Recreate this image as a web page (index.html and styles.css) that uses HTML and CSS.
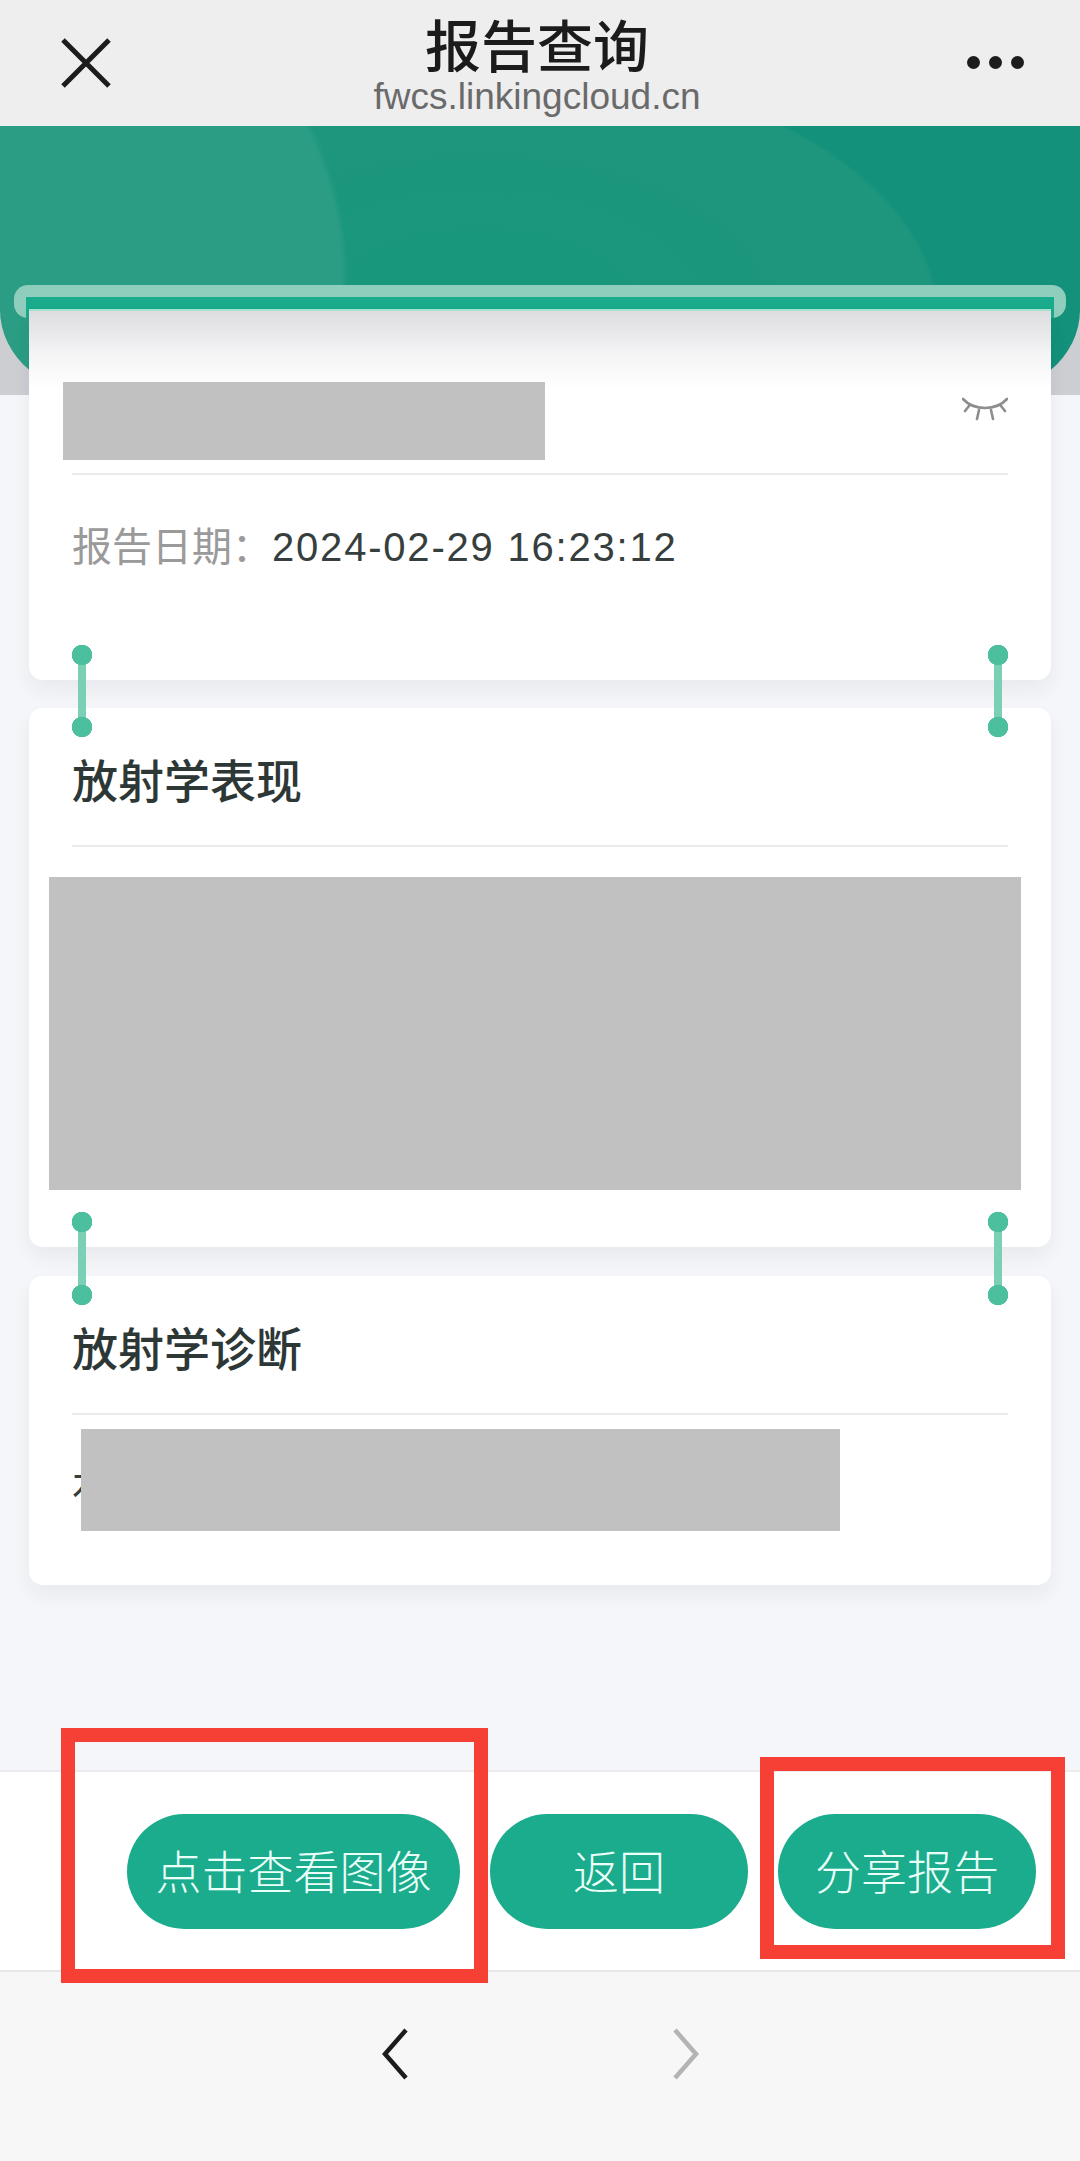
FILE: index.html
```html
<!DOCTYPE html>
<html>

<head>
    <meta charset="utf-8" />
    <title>报告查询</title>
    <link rel="stylesheet" href="styles.css">
</head>

<body>

<div class="topbar">
    <svg class="close" width="50" height="50" viewBox="0 0 50 50">
        <path d="M2 2 L48 48 M48 2 L2 48" />
    </svg>
    <div class="top-title">
        <h1>报告查询</h1>
        <p>fwcs.linkingcloud.cn</p>
    </div>
    <div class="more"><span></span><span></span><span></span></div>
</div>

<div class="main">
    <div class="hero">
        <div class="hero-green"></div>
    </div>

    <div class="sheet">
        <div class="rail"></div>

        <div class="card card-first">
            <div class="head">
                <div class="mask mask-name"></div>
                <svg class="eye" width="46" height="24" viewBox="0 0 46 24">
                    <path d="M1 2 C12 14 34 14 45 2 M7 9 L3 14 M17 13 L15 22 M29 13 L31 22 M39 9 L43 14" />
                </svg>
            </div>
            <div class="line"></div>
            <div class="date"><span class="date-label">报告日期：</span><span class="date-value">2024-02-29 16:23:12</span></div>
        </div>

        <div class="gap">
            <div class="link link-left"></div>
            <div class="link link-right"></div>
        </div>

        <div class="card">
            <h2>放射学表现</h2>
            <div class="line"></div>
            <div class="mask mask-wide"></div>
        </div>

        <div class="gap gap-second">
            <div class="link link-left"></div>
            <div class="link link-right"></div>
        </div>

        <div class="card card-last">
            <h2>放射学诊断</h2>
            <div class="line"></div>
            <p class="result">右</p>
            <div class="mask mask-result"></div>
        </div>
    </div>
</div>

<div class="actions">
    <a class="btn btn-image">点击查看图像</a>
    <a class="btn">返回</a>
    <a class="btn">分享报告</a>
    <div class="mark mark-image"></div>
    <div class="mark mark-share"></div>
</div>

<div class="nav">
    <svg width="28" height="52" viewBox="0 0 28 52">
        <path class="nav-on" d="M25 2 L4 26 L25 50" />
    </svg>
    <svg width="28" height="52" viewBox="0 0 28 52">
        <path class="nav-off" d="M3 2 L24 26 L3 50" />
    </svg>
</div>

</body>

</html>
```

FILE: styles.css
```css
* {
    padding: 0;
    margin: 0;
    box-sizing: border-box;
}

body {
    width: 1080px;
    min-height: 2161px;
    display: flex;
    flex-direction: column;
    background: #f5f6f9;
    font-family: "Liberation Sans", "Noto Sans CJK SC", sans-serif;
}

/* top bar */
.topbar {
    height: 126px;
    padding: 7px 56px 0 56px;
    display: grid;
    grid-template-columns: 1fr auto 1fr;
    background: #eeeeef;
}

.close {
    margin: 31px 0 0 5px;
}

.close path {
    fill: none;
    stroke: #1c1c1c;
    stroke-width: 5;
}

.top-title {
    text-align: center;
    margin-left: -6px;
}

.top-title h1 {
    font-size: 56px;
    line-height: 72px;
    font-weight: 500;
    color: #1b1b1b;
    font-family: "Noto Sans CJK SC", sans-serif;
}

.top-title p {
    font-size: 37px;
    line-height: 36px;
    color: #6a6a6a;
}

.more {
    display: flex;
    justify-content: flex-end;
    gap: 9px;
    padding: 49px 0 0;
}

.more span {
    width: 13px;
    height: 13px;
    border-radius: 50%;
    background: #1c1c1c;
}

/* green header */
.main {
    flex: 1;
}

.hero {
    height: 269px;
    background: #cdced2;
}

.hero-green {
    height: 269px;
    border-radius: 0 0 100px 100px / 0 0 85px 85px;
    background:
        radial-gradient(circle at 0 154px, #2a9d84 342px, transparent 348px),
        radial-gradient(ellipse 460px 260px at 480px 194px, #17977c 0, #1e967e 99%, transparent 100%),
        #13917a;
}

.sheet {
    position: relative;
    margin-top: -110px;
    padding: 0 14px;
}

.rail {
    height: 33px;
    position: relative;
    border-radius: 14px;
    background: #8fcdbc;
}

.rail::after {
    content: "";
    position: absolute;
    left: 12px;
    right: 12px;
    top: 12px;
    bottom: 0;
    background: #1aaa8c;
}

/* cards */
.card {
    display: flow-root;
    position: relative;
    margin: 0 15px;
    padding-top: 38px;
    border-radius: 14px;
    background: #fff;
    box-shadow: 0 10px 20px rgba(40, 40, 60, 0.06);
}

.card-first {
    margin-top: -9px;
    padding-top: 73px;
    padding-bottom: 105px;
    border-radius: 0 0 14px 14px;
    border-top: 2px solid #a5e3cf;
    background: linear-gradient(#dddce0 0, #f5f5f6 45px, #fff 78px);
}

.head {
    display: flex;
    justify-content: space-between;
    padding: 0 43px 13px 34px;
    margin-top: -2px;
}

.eye {
    margin-top: 15px;
}

.eye path {
    fill: none;
    stroke: #8d8d8d;
    stroke-width: 2.6;
    stroke-linecap: round;
}

.mask {
    background: #c1c1c1;
}

.mask-name {
    width: 482px;
    height: 78px;
}

.mask-wide {
    width: 972px;
    height: 313px;
    margin: 30px 0 57px 20px;
}

.mask-result {
    position: absolute;
    left: 52px;
    top: 153px;
    width: 759px;
    height: 102px;
}

.line {
    height: 2px;
    margin: 0 43px;
    background: #ebebed;
}

.date {
    margin: 44px 43px 0;
    font-size: 40px;
    line-height: 56px;
    white-space: nowrap;
}

.date-label {
    color: #9a9a9a;
}

.date-value {
    color: #373f3e;
    letter-spacing: 1.8px;
}

h2 {
    margin: 0 43px 35px;
    font-size: 46px;
    line-height: 64px;
    font-weight: 500;
    color: #2d3836;
    font-family: "Noto Sans CJK SC", sans-serif;
}

.result {
    margin: 44px 43px 70px;
    font-size: 40px;
    line-height: 56px;
    color: #373f3e;
}

/* links between cards */
.gap {
    position: relative;
    height: 28px;
}

.gap-second {
    height: 29px;
}

.link {
    position: absolute;
    top: -35px;
    bottom: -29px;
    width: 20px;
    z-index: 2;
}

.link-left {
    left: 58px;
}

.link-right {
    right: 58px;
}

.link::before {
    content: "";
    position: absolute;
    left: 6px;
    top: 10px;
    bottom: 10px;
    width: 8px;
    background: #7bcfb5;
}

.link::after {
    content: "";
    position: absolute;
    left: 0;
    top: 0;
    bottom: 0;
    width: 20px;
    background:
        radial-gradient(circle at 10px 10px, #4cbf9f 10px, transparent 10.5px),
        radial-gradient(circle at 10px calc(100% - 10px), #4cbf9f 10px, transparent 10.5px);
}

/* bottom buttons */
.actions {
    position: relative;
    height: 202px;
    padding: 42px 44px 0 0;
    display: flex;
    justify-content: flex-end;
    gap: 30px;
    background: #fff;
    border-top: 2px solid #ececee;
    border-bottom: 2px solid #e8e8ea;
}

.btn {
    width: 258px;
    height: 115px;
    border-radius: 58px;
    background: #1bab8d;
    color: #e9fff8;
    font-size: 46px;
    line-height: 111px;
    text-align: center;
    font-family: "Noto Sans CJK SC", sans-serif;
    font-weight: 300;
}

.btn-image {
    width: 333px;
}

.mark {
    position: absolute;
    border: 14px solid #f63f35;
    z-index: 3;
}

.mark-image {
    left: 61px;
    top: -44px;
    width: 427px;
    height: 255px;
}

.mark-share {
    left: 760px;
    top: -15px;
    width: 305px;
    height: 202px;
}

/* browser nav */
.nav {
    height: 189px;
    padding-top: 56px;
    display: flex;
    justify-content: center;
    gap: 263px;
    background: #f7f7f8;
}

.nav svg {
    display: block;
}

.nav path {
    fill: none;
    stroke-width: 4.5;
}

.nav-on {
    stroke: #1c1c1c;
}

.nav-off {
    stroke: #b4b4b4;
}
```
